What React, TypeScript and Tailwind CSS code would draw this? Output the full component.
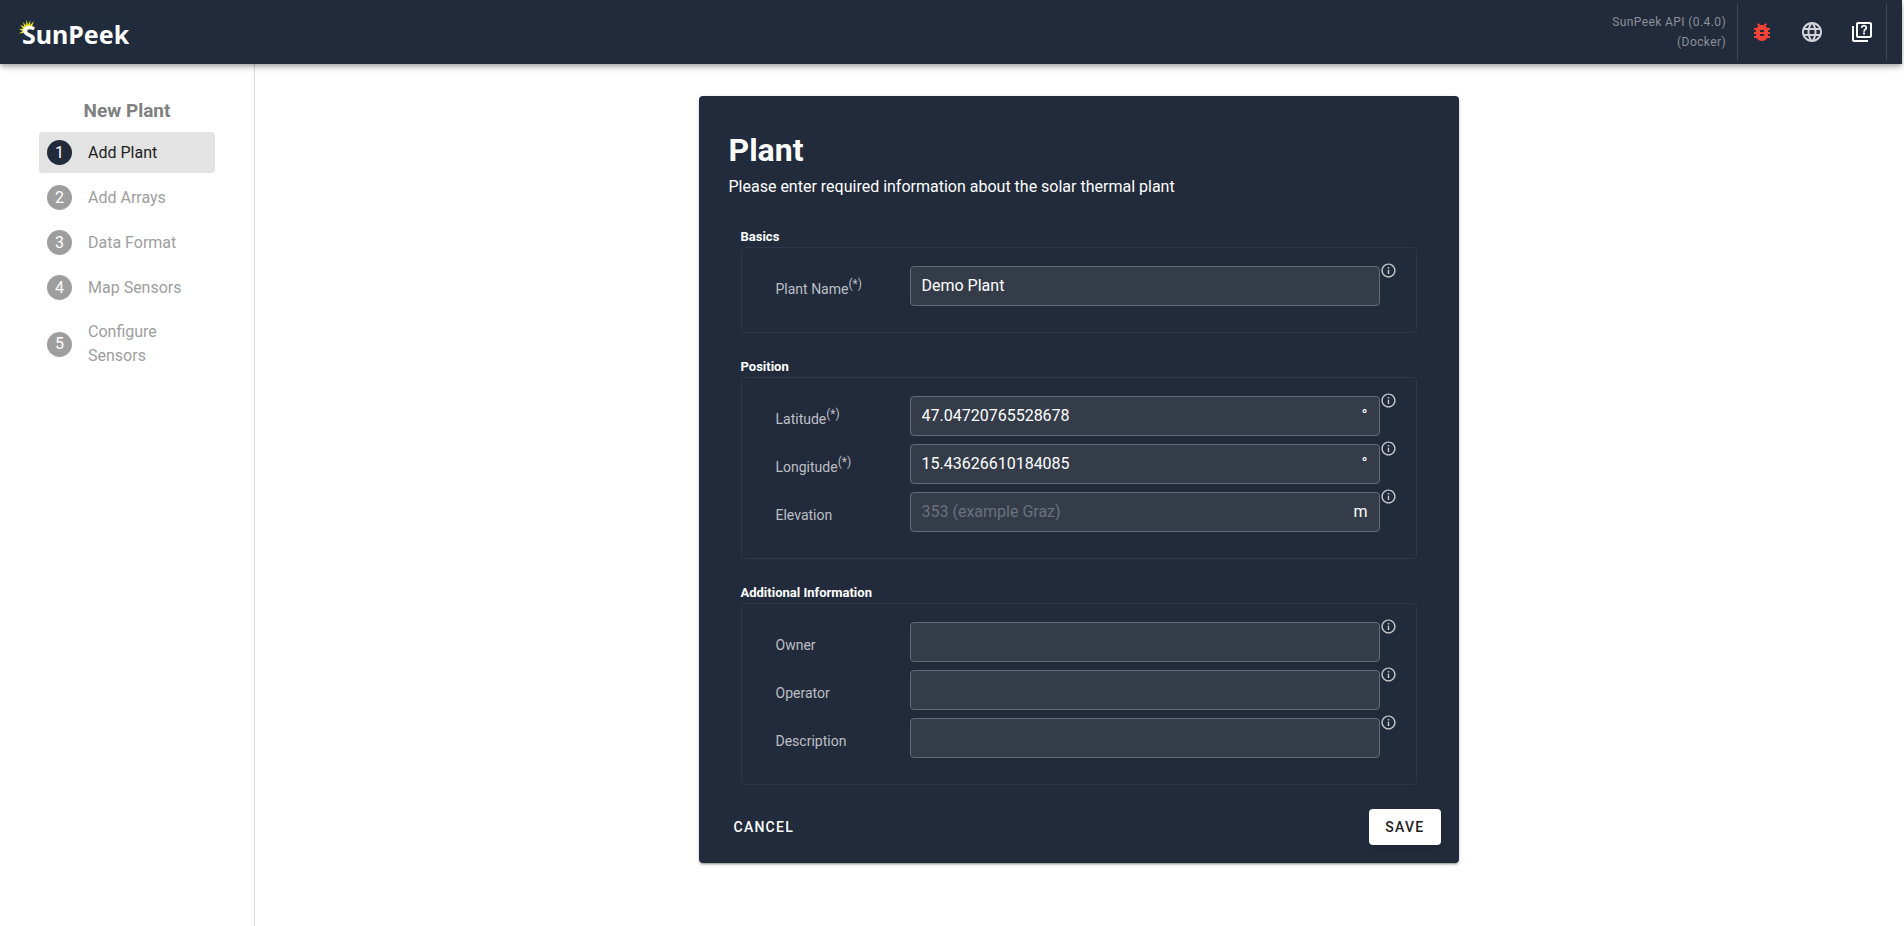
import { useState } from "react";
import { MdBugReport, MdInfoOutline, MdLanguage } from "react-icons/md";

const steps = ["Add Plant", "Add Arrays", "Data Format", "Map Sensors", "Configure Sensors"];

type Field = {
    id: string;
    label: string;
    required?: boolean;
    unit?: string;
    placeholder?: string;
};

const sections: { title: string; fields: Field[] }[] = [
    {
        title: "Basics",
        fields: [{ id: "name", label: "Plant Name", required: true }],
    },
    {
        title: "Position",
        fields: [
            { id: "latitude", label: "Latitude", required: true, unit: "°" },
            { id: "longitude", label: "Longitude", required: true, unit: "°" },
            { id: "elevation", label: "Elevation", unit: "m", placeholder: "353 (example Graz)" },
        ],
    },
    {
        title: "Additional Information",
        fields: [
            { id: "owner", label: "Owner" },
            { id: "operator", label: "Operator" },
            { id: "description", label: "Description" },
        ],
    },
];

function Logo() {
    return (
        <a href="#" className="relative ml-[19px] flex h-[26px] items-center bg-[#202c3c] pr-1 pl-[3px] text-white">
            <svg viewBox="0 0 16 16" className="absolute top-0 left-0 size-4">
                <path
                    d="M4 14L0 14.500L3.500 12L0 10L4 9.800L1.300 5.800L5.300 7.800L4 3L7 6.500L7.600 0.500L9 6L11.300 1.300L11.200 6L15 2.300L13 7.500L8 11Z"
                    fill="#ece31a"
                />
            </svg>
            <span className="relative pt-1 font-['Noto_Sans',sans-serif] text-[25px] leading-[30px] font-bold">SunPeek</span>
        </a>
    );
}

function HelpIcon() {
    return (
        <svg viewBox="0 0 24 24" width={24} height={24} fill="currentColor">
            <path d="M4 6H2V20C2 21.110 2.900 22 4 22H18V20H4V6M20 4V16H8V4H20M20 2H8C6.900 2 6 2.900 6 4V16C6 17.110 6.900 18 8 18H20C21.110 18 22 17.110 22 16V4C22 2.900 21.110 2 20 2Z" />
            <path d="M11.700 7.900A2.300 2.100 0 1 1 15.500 9.300C14.500 10 14 10.400 14 11.700" fill="none" stroke="currentColor" strokeWidth="1.700" />
            <path d="M13.100 12.600H14.900V14.400H13.100Z" />
        </svg>
    );
}

function Header() {
    return (
        <header className="relative flex h-16 items-center justify-between bg-[#222b3b] shadow-[0_2px_4px_-1px_rgba(0,0,0,0.2),0_4px_5px_rgba(0,0,0,0.14),0_1px_10px_rgba(0,0,0,0.12)]">
            <Logo />
            <div className="flex h-14 items-center pr-[15px]">
                <p className="pr-[11px] text-right text-xs leading-5 tracking-[0.4px] text-[#8a8f98]">
                    SunPeek API (0.4.0)
                    <br />
                    (Docker)
                </p>
                <div className="flex h-full items-center gap-[26px] border-x border-[#414855] px-3">
                    <button type="button" aria-label="Report a bug" className="text-[#f44336]">
                        <MdBugReport size={24} />
                    </button>
                    <button type="button" aria-label="Language" className="text-[#d3d5d8]">
                        <MdLanguage size={24} />
                    </button>
                    <button type="button" aria-label="Help" className="text-white">
                        <HelpIcon />
                    </button>
                </div>
            </div>
        </header>
    );
}

function Sidebar() {
    return (
        <nav className="w-[255px] shrink-0 border-r border-[#dedede] px-[39px] pt-8">
            <h2 className="mb-1.5 text-center text-[19px] leading-[30px] font-bold text-[#808080]">New Plant</h2>
            <ol className="flex flex-col gap-1">
                {steps.map((step, i) => (
                    <li key={step}>
                        <a
                            href="#"
                            className={
                                i === 0
                                    ? "flex items-center gap-4 rounded bg-[#e3e3e3] px-2 py-2 text-[#212121]"
                                    : "flex items-center gap-4 rounded px-2 py-2 text-[#9e9e9e]"
                            }
                        >
                            <span
                                className={
                                    i === 0
                                        ? "flex size-[25px] shrink-0 items-center justify-center rounded-full bg-[#222b3b] text-white"
                                        : "flex size-[25px] shrink-0 items-center justify-center rounded-full bg-[#9e9e9e] text-white"
                                }
                            >
                                {i + 1}
                            </span>
                            <span className="max-w-24 leading-6">{step}</span>
                        </a>
                    </li>
                ))}
            </ol>
        </nav>
    );
}

export default function App() {
    const [values, setValues] = useState<Record<string, string>>({
        name: "Demo Plant",
        latitude: "47.04720765528678",
        longitude: "15.43626610184085",
    });

    return (
        <div className="flex min-h-screen flex-col bg-white pr-0.5 font-[Roboto,sans-serif]">
            <Header />
            <div className="flex grow">
                <Sidebar />
                <main className="flex grow items-start justify-center pt-8 pb-16">
                    <form
                        onSubmit={(e) => e.preventDefault()}
                        className="w-full max-w-[760px] rounded bg-[#222b3b] px-[18px] pt-8 pb-[18px] text-white shadow-[0_3px_1px_-2px_rgba(0,0,0,0.2),0_2px_2px_rgba(0,0,0,0.14),0_1px_5px_rgba(0,0,0,0.12)]"
                    >
                        <div className="mb-[25px] px-3">
                            <h1 className="text-[32px] leading-11 font-bold">Plant</h1>
                            <p className="leading-[30px]">Please enter required information about the solar thermal plant</p>
                        </div>

                        {sections.map((section) => (
                            <section key={section.title} className="mb-6 px-6">
                                <h3 className="text-[13px] leading-5 font-bold">{section.title}</h3>
                                <div className="flex flex-col gap-2 rounded border border-[#2c3748] pt-[18px] pr-[19px] pb-[26px] pl-[34px]">
                                    {section.fields.map((field) => (
                                        <div key={field.id} className="flex">
                                            <label htmlFor={field.id} className="w-[134px] pt-[13px] text-sm leading-5 text-[#bdbfc4]">
                                                {field.label}
                                                {field.required && <sup className="text-xs">(*)</sup>}
                                            </label>
                                            <div className="flex h-10 grow rounded border border-[#646b76] bg-[#343c4a] px-[11px]">
                                                <input
                                                    id={field.id}
                                                    type="text"
                                                    value={values[field.id] ?? ""}
                                                    placeholder={field.placeholder}
                                                    onChange={(e) => setValues({ ...values, [field.id]: e.target.value })}
                                                    className="min-w-0 grow bg-transparent text-white outline-none placeholder:text-[#6a717c]"
                                                />
                                                {field.unit && <span className="pt-[7px]">{field.unit}</span>}
                                            </div>
                                            <MdInfoOutline size={17} className="-mt-1 shrink-0 text-[#c8cace]" />
                                        </div>
                                    ))}
                                </div>
                            </section>
                        ))}

                        <div className="flex items-center justify-between">
                            <button type="button" className="h-9 px-[17px] text-sm font-medium tracking-[1.25px]">
                                CANCEL
                            </button>
                            <button
                                type="submit"
                                className="h-9 rounded bg-white px-4 text-sm font-medium tracking-[1.25px] text-[#212121] shadow-md"
                            >
                                SAVE
                            </button>
                        </div>
                    </form>
                </main>
            </div>
        </div>
    );
}
